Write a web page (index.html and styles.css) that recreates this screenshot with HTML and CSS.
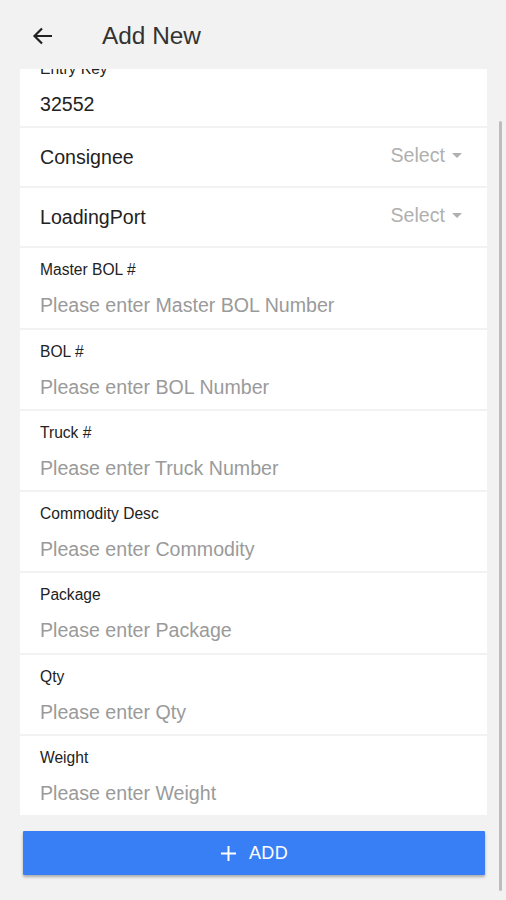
FILE: index.html
```html
<!DOCTYPE html>
<html>
<head>
<meta charset="utf-8">
<link rel="stylesheet" href="styles.css">
</head>
<body>
<div class="page">
  <header class="header">
    <svg class="back" width="22" height="20" viewBox="0 0 22 20"><path d="M20 10H3M10 2.5L2.5 10L10 17.5" fill="none" stroke="#222" stroke-width="2.2"/></svg>
    <span class="title">Add New</span>
  </header>
  <main class="scroll">
    <div class="content">
      <div class="list">
        <div class="row field">
          <div class="label">Entry Key</div>
          <div class="value">32552</div>
        </div>
        <div class="row select">
          <span class="name">Consignee</span>
          <span class="picker">Select <span class="caret"></span></span>
        </div>
        <div class="row select">
          <span class="name">LoadingPort</span>
          <span class="picker">Select <span class="caret"></span></span>
        </div>
        <div class="row field">
          <div class="label">Master BOL #</div>
          <div class="placeholder">Please enter Master BOL Number</div>
        </div>
        <div class="row field">
          <div class="label">BOL #</div>
          <div class="placeholder">Please enter BOL Number</div>
        </div>
        <div class="row field">
          <div class="label">Truck #</div>
          <div class="placeholder">Please enter Truck Number</div>
        </div>
        <div class="row field">
          <div class="label">Commodity Desc</div>
          <div class="placeholder">Please enter Commodity</div>
        </div>
        <div class="row field">
          <div class="label">Package</div>
          <div class="placeholder">Please enter Package</div>
        </div>
        <div class="row field">
          <div class="label">Qty</div>
          <div class="placeholder">Please enter Qty</div>
        </div>
        <div class="row field">
          <div class="label">Weight</div>
          <div class="placeholder">Please enter Weight</div>
        </div>
      </div>
      <button class="add">
        <svg width="17" height="17" viewBox="0 0 17 17"><path d="M8.5 1v15M1 8.5h15" stroke="#fff" stroke-width="2"/></svg>
        <span>ADD</span>
      </button>
    </div>
    <div class="scrollbar"></div>
  </main>
</div>
</body>
</html>
```
FILE: styles.css
```css
* { box-sizing: border-box; }
html, body { margin: 0; padding: 0; }
body {
  background: #f2f2f2;
  font-family: "Liberation Sans", Arial, sans-serif;
  color: #333;
}
.page {
  width: 506px;
  height: 900px;
  display: flex;
  flex-direction: column;
  overflow: hidden;
}
.header {
  height: 69px;
  flex: none;
  display: flex;
  align-items: center;
  padding-left: 32px;
  padding-top: 3px;
}
.back { display: block; }
.title {
  margin-left: 48px;
  font-size: 24.4px;
  color: #333;
}
.scroll {
  position: relative;
  flex: 1;
  overflow: hidden;
}
.content {
  margin-top: -22px;
  padding: 0 19px 0 20px;
}
.list {
  display: flex;
  flex-direction: column;
  gap: 2px;
}
.row {
  background: #fff;
  padding: 0 25px 0 20px;
}
.field {
  height: 79.3px;
  display: flex;
  flex-direction: column;
  padding-top: 13px;
}
.label {
  font-size: 15.6px;
  line-height: 18px;
  color: #222;
}
.value, .placeholder {
  margin-top: 14px;
  font-size: 19.6px;
  line-height: 24px;
}
.value { color: #222; }
.placeholder { color: #9a9a9a; }
.select {
  height: 58px;
  display: flex;
  align-items: center;
  justify-content: space-between;
  font-size: 19.6px;
}
.name { color: #222; margin-top: 0; }
.picker {
  color: #b0b0b0;
  display: flex;
  align-items: center;
  gap: 7px;
  margin-top: -3px;
}
.caret {
  width: 0;
  height: 0;
  border-left: 5px solid transparent;
  border-right: 5px solid transparent;
  border-top: 5px solid #b0b0b0;
}
.add {
  margin: 16px 2px 0 3px;
  width: calc(100% - 5px);
  height: 44px;
  border: 0;
  border-radius: 1px;
  background: #387ff6;
  color: #fff;
  font-family: inherit;
  font-size: 18px;
  display: flex;
  align-items: center;
  justify-content: center;
  gap: 12px;
  box-shadow: 0 2px 3px rgba(0,0,0,0.3);
}
.add span { letter-spacing: 0.3px; }
.scrollbar {
  position: absolute;
  right: 4px;
  top: 52px;
  width: 3px;
  height: 770px;
  background: #bdbdbd;
  border-radius: 2px;
}
```
